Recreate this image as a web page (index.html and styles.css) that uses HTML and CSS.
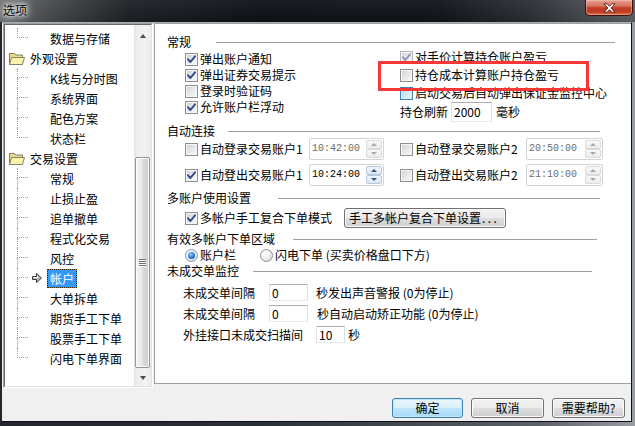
FILE: index.html
```html
<!DOCTYPE html>
<html lang="zh-CN">
<head>
<meta charset="utf-8">
<title>选项</title>
<link rel="stylesheet" href="styles.css">
</head>
<body>
<div class="window">
  <div class="titlebar">
    <span class="title">选项</span>
    <div class="close">
      <svg width="13" height="10" viewBox="0 0 13 10"><path d="M1 0.8h3.2l2.3 2.5 2.3-2.5h3.2l-3.9 4.2 3.9 4.2h-3.2l-2.3-2.5-2.3 2.5h-3.2l3.9-4.2z" fill="#fff" stroke="#4a1a12" stroke-width="0.9" stroke-linejoin="round"/></svg>
    </div>
  </div>
  <div class="client">
    <div class="main">
      <div class="tree">
        <div class="tree-inner">
          <ul class="tree-list">
            <li class="node child last"><span class="elbow"><i></i><i></i></span><span class="slot"></span><span class="lbl">数据与存储</span></li>
            <li class="node folder"><svg class="fold" width="16" height="13" viewBox="0 0 16 13"><path d="M0.5 1.5h5l1.2 1.5h6.8v9.5h-13z" fill="#e9dc8a" stroke="#7d7b6c"/><path d="M2.6 5.5h12.9l-2.1 7h-12.9z" fill="#fbf3a8" stroke="#85836e"/></svg><span class="lbl">外观设置</span></li>
            <li class="node child"><span class="elbow"><i></i><i></i></span><span class="slot"></span><span class="lbl">K线与分时图</span></li>
            <li class="node child"><span class="elbow"><i></i><i></i></span><span class="slot"></span><span class="lbl">系统界面</span></li>
            <li class="node child"><span class="elbow"><i></i><i></i></span><span class="slot"></span><span class="lbl">配色方案</span></li>
            <li class="node child last"><span class="elbow"><i></i><i></i></span><span class="slot"></span><span class="lbl">状态栏</span></li>
            <li class="node folder"><svg class="fold" width="16" height="13" viewBox="0 0 16 13"><path d="M0.5 1.5h5l1.2 1.5h6.8v9.5h-13z" fill="#e9dc8a" stroke="#7d7b6c"/><path d="M2.6 5.5h12.9l-2.1 7h-12.9z" fill="#fbf3a8" stroke="#85836e"/></svg><span class="lbl">交易设置</span></li>
            <li class="node child"><span class="elbow"><i></i><i></i></span><span class="slot"></span><span class="lbl">常规</span></li>
            <li class="node child"><span class="elbow"><i></i><i></i></span><span class="slot"></span><span class="lbl">止损止盈</span></li>
            <li class="node child"><span class="elbow"><i></i><i></i></span><span class="slot"></span><span class="lbl">追单撤单</span></li>
            <li class="node child"><span class="elbow"><i></i><i></i></span><span class="slot"></span><span class="lbl">程式化交易</span></li>
            <li class="node child"><span class="elbow"><i></i><i></i></span><span class="slot"></span><span class="lbl">风控</span></li>
            <li class="node child"><span class="elbow"><i></i><i></i></span><span class="slot"><svg width="10" height="10" viewBox="0 0 10 10"><path d="M0.5 3.5h4v-3l5 4.5-5 4.5v-3h-4z" fill="#b8b8b8" stroke="#3c3c3c"/><path d="M1.5 4.5h4v-1.6" fill="none" stroke="#f4f4f4"/></svg></span><span class="lbl sel">帐户</span></li>
            <li class="node child"><span class="elbow"><i></i><i></i></span><span class="slot"></span><span class="lbl">大单拆单</span></li>
            <li class="node child"><span class="elbow"><i></i><i></i></span><span class="slot"></span><span class="lbl">期货手工下单</span></li>
            <li class="node child"><span class="elbow"><i></i><i></i></span><span class="slot"></span><span class="lbl">股票手工下单</span></li>
            <li class="node child last"><span class="elbow"><i></i><i></i></span><span class="slot"></span><span class="lbl">闪电下单界面</span></li>
          </ul>
          <div class="vscroll">
            <div class="sbtn"><i class="tri-up"></i></div>
            <div class="track"><div class="thumb"><i></i><i></i><i></i><i></i></div></div>
            <div class="sbtn"><i class="tri-dn"></i></div>
          </div>
        </div>
      </div>

      <div class="panel">
        <div class="hdr"><span>常规</span><i class="rule r1"></i></div>
        <div class="general">
          <div class="gcol gl">
            <label class="crow"><span class="cb"><svg class="ck" width="9" height="9" viewBox="0 0 9 9"><path d="M1 4.3 3.4 7 8 1.3"/></svg></span>弹出账户通知</label>
            <label class="crow"><span class="cb"><svg class="ck" width="9" height="9" viewBox="0 0 9 9"><path d="M1 4.3 3.4 7 8 1.3"/></svg></span>弹出证券交易提示</label>
            <label class="crow"><span class="cb"></span>登录时验证码</label>
            <label class="crow"><span class="cb"><svg class="ck" width="9" height="9" viewBox="0 0 9 9"><path d="M1 4.3 3.4 7 8 1.3"/></svg></span>允许账户栏浮动</label>
          </div>
          <div class="gcol gr">
            <label class="crow"><span class="cb dim"><svg class="ck" width="9" height="9" viewBox="0 0 9 9"><path d="M1 4.3 3.4 7 8 1.3"/></svg></span>对手价计算持仓账户盈亏</label>
            <label class="crow"><span class="cb"></span>持仓成本计算账户持仓盈亏</label>
            <label class="crow"><span class="cb hot"></span>启动交易后自动弹出保证金监控中心</label>
            <div class="crow refresh">持仓刷新<span class="edit e-2000">2000</span><span class="unit">毫秒</span></div>
          </div>
        </div>

        <div class="hdr h-auto"><span>自动连接</span><i class="rule r2"></i></div>
        <div class="trow">
          <label class="tgrp tg1"><span class="cb"></span>自动登录交易账户1</label>
          <div class="timebox w75 dis"><span class="tv">10:42:00</span><span class="spin"><b class="up"></b><b class="dn"></b></span></div>
          <label class="tgrp tg2"><span class="cb"></span>自动登录交易账户2</label>
          <div class="timebox w77 dis"><span class="tv">20:50:00</span><span class="spin"><b class="up"></b><b class="dn"></b></span></div>
        </div>
        <div class="trow trow2">
          <label class="tgrp tg1"><span class="cb"><svg class="ck" width="9" height="9" viewBox="0 0 9 9"><path d="M1 4.3 3.4 7 8 1.3"/></svg></span>自动登出交易账户1</label>
          <div class="timebox w75 act"><span class="tv">10:24:00</span><span class="spin"><b class="up"></b><b class="dn"></b></span></div>
          <label class="tgrp tg2"><span class="cb"></span>自动登出交易账户2</label>
          <div class="timebox w77 dis"><span class="tv">21:10:00</span><span class="spin"><b class="up"></b><b class="dn"></b></span></div>
        </div>

        <div class="hdr h-multi"><span>多账户使用设置</span><i class="rule r3"></i></div>
        <div class="mrow">
          <label class="tgrp"><span class="cb"><svg class="ck" width="9" height="9" viewBox="0 0 9 9"><path d="M1 4.3 3.4 7 8 1.3"/></svg></span>多帐户手工复合下单模式</label>
          <button class="pbtn">手工多帐户复合下单设置<span class="dots">...</span></button>
        </div>

        <div class="hdr h-area"><span>有效多帐户下单区域</span><i class="rule r4"></i></div>
        <div class="rrow">
          <label class="tgrp"><span class="rb on"><i></i></span>账户栏</label>
          <label class="tgrp rg2"><span class="rb"></span>闪电下单 (买卖价格盘口下方)</label>
        </div>

        <div class="hdr h-mon"><span>未成交单监控</span><i class="rule r5"></i></div>
        <div class="urow">
          <span class="ulbl">未成交单间隔</span><span class="edit e-sec">0</span><span class="usfx">秒发出声音警报 (0为停止)</span>
        </div>
        <div class="urow">
          <span class="ulbl">未成交单间隔</span><span class="edit e-sec">0</span><span class="usfx s2">秒自动启动矫正功能 (0为停止)</span>
        </div>
        <div class="urow">
          <span class="ulbl wide">外挂接口未成交扫描间</span><span class="edit e-scan">10</span><span class="usfx s3">秒</span>
        </div>
      </div>
    </div>

    <div class="buttons">
      <button class="btn default">确定</button>
      <button class="btn">取消</button>
      <button class="btn">需要帮助?</button>
    </div>
  </div>
  <div class="annot"></div>
</div>
</body>
</html>
```

FILE: styles.css
```css
* { box-sizing: border-box; margin: 0; padding: 0; }
html, body { width: 635px; height: 426px; overflow: hidden; }
body {
  font: 12px/16px "Noto Sans CJK SC", "Noto Sans", sans-serif;
  color: #000;
  background: #1c2027;
}
.window {
  position: relative;
  width: 635px;
  height: 426px;
  display: flex;
  flex-direction: column;
  background: linear-gradient(to right, #23272d 0, #2a2e35 40%, #5d6268 85%, #9a9ea3 100%);
}

/* title bar */
.titlebar {
  height: 22px;
  display: flex;
  align-items: flex-start;
  justify-content: space-between;
  background:
    linear-gradient(to bottom, rgba(255,255,255,0.06), rgba(0,0,0,0.05)),
    linear-gradient(to right, #6c6e71 0, #45484c 50px, #1b1e23 130px, #0c1015 260px, #0f1318 440px, #2a2d32 530px, #4c4f54 600px, #5a5d61 635px);
}
.title {
  margin: 3px 0 0 3px;
  line-height: 14px;
  color: #000;
  text-shadow: 0 0 3px #fff, 0 0 6px #fff, 0 0 10px rgba(255,255,255,0.8), 0 0 14px rgba(255,255,255,0.6);
}
.close {
  width: 48px;
  height: 16px;
  margin-right: 2px;
  display: flex;
  align-items: center;
  justify-content: center;
  border: 1px solid #3a120c;
  border-top: none;
  border-radius: 0 0 5px 5px;
  background: linear-gradient(to bottom, #e6a091 0%, #d7745f 40%, #c33f25 52%, #bd3a21 75%, #de6a45 100%);
  box-shadow: inset 0 0 0 1px rgba(255,210,200,0.45);
}

/* client */
.client {
  flex: 1;
  margin: 0 3px 4px 2px;
  background: #f0f0f0;
  border-top: 1px solid #a9acb0;
  border-right: 1px solid #0d0f12;
  border-bottom: 1px solid #0d0f12;
  display: flex;
  flex-direction: column;
}
.main {
  height: 365px;
  display: flex;
}

/* tree */
.tree {
  width: 150px;
  height: 365px;
  margin-left: 1px;
  border: 1px solid;
  border-color: #a0a0a0 #fff #fff #a0a0a0;
  background: #fff;
}
.tree-inner {
  height: 100%;
  display: flex;
  border: 1px solid;
  border-color: #696969 #e3e3e3 #e3e3e3 #696969;
}
.tree-list {
  flex: 1;
  list-style: none;
  padding-top: 3px;
  overflow: hidden;
}
.node {
  height: 20px;
  display: flex;
  align-items: center;
  white-space: nowrap;
}
.node.folder { padding-left: 4px; }
.fold { flex: none; margin-right: 2px; }
.elbow {
  width: 11px;
  height: 20px;
  margin-left: 12px;
  display: flex;
  flex-direction: column;
  flex: none;
}
.elbow i {
  display: block;
  height: 10px;
  border-left: 1px dotted #a0a0a0;
}
.elbow i:first-child { border-bottom: 1px dotted #a0a0a0; }
.node.last .elbow i:last-child { border-left-color: transparent; }
.slot {
  width: 19px;
  flex: none;
  display: flex;
  align-items: center;
  padding-left: 4px;
}
.lbl {
  border: 1px dotted transparent;
  padding: 0 2px;
  line-height: 17px;
}
.lbl.sel {
  background: #3399ff;
  color: #fff;
  border-color: #3a2400;
}

/* scrollbar */
.vscroll {
  width: 17px;
  flex: none;
  display: flex;
  flex-direction: column;
  background: linear-gradient(to right, #e3e3e3 0, #eeeeee 20%, #f2f2f2 60%, #ececec 100%);
}
.sbtn {
  height: 17px;
  display: flex;
  align-items: center;
  justify-content: center;
}
.tri-up, .tri-dn {
  width: 0;
  height: 0;
  border-left: 3.5px solid transparent;
  border-right: 3.5px solid transparent;
}
.tri-up { border-bottom: 4px solid #4a4a4a; margin-top: 5px; }
.tri-dn { border-top: 4px solid #4a4a4a; margin-top: 1px; }
.track {
  flex: 1;
  padding: 115px 1px 0;
}
.thumb {
  height: 211px;
  border: 1px solid #959595;
  border-radius: 2px;
  background: linear-gradient(to right, #f4f4f4 0, #e9e9e9 45%, #d9d9d9 55%, #cfcfcf 100%);
  box-shadow: inset 0 0 0 1px rgba(255,255,255,0.85);
  display: flex;
  flex-direction: column;
  align-items: center;
  justify-content: center;
}
.thumb i {
  display: block;
  width: 7px;
  height: 2px;
  border-top: 1px solid #707070;
  border-bottom: 1px solid #fafafa;
}

/* right panel */
.panel {
  flex: 1;
  height: 361px;
  margin-left: 1px;
  background: #fff;
  border-top: 1px solid #a0a0a0;
  border-left: 1px solid #a0a0a0;
  border-bottom: 1px solid #a0a0a0;
  padding-top: 11px;
}
.hdr {
  height: 14px;
  line-height: 14px;
  display: flex;
  align-items: center;
  padding-left: 12px;
  white-space: nowrap;
}
.rule { display: block; height: 1px; background: #a0a0a0; }
.r1 { margin-left: 25px; width: 399px; }
.r2 { margin-left: 13px; width: 372px; }
.r3 { margin-left: 27px; width: 322px; }
.r4 { margin-left: 18px; width: 304px; }
.r5 { margin-left: 14px; width: 339px; }

.general { height: 73px; display: flex; }
.gcol { display: flex; flex-direction: column; }
.gl { width: 245px; padding: 2px 0 0 30px; }
.gr .crow + .crow { margin-top: 2px; }
.gr .crow.refresh { margin-top: 1px; height: 20px; }
.crow {
  height: 16px;
  display: flex;
  align-items: center;
  white-space: nowrap;
}
.unit { margin-left: 4px; }

/* checkbox */
.cb {
  width: 13px;
  height: 13px;
  flex: none;
  margin-right: 2px;
  border: 1px solid #8e8f8f;
  background: linear-gradient(135deg, #cdd0d4 0%, #e6e7e9 50%, #fafafa 100%);
  box-shadow: inset 0 0 0 1px #f6f6f6;
  display: flex;
  align-items: center;
  justify-content: center;
}
.cb.hot {
  border-color: #3c7fb1;
  background: linear-gradient(135deg, #a9d6f2 0%, #cde8f8 50%, #eef8fd 100%);
  box-shadow: inset 0 0 0 1px #def0fa;
}
.ck path {
  fill: none;
  stroke: #34488a;
  stroke-width: 1.9;
  stroke-linecap: round;
  stroke-linejoin: round;
}
.cb.dim .ck path { stroke: #8d98bb; }
.cb.dim { border-color: #b5b6b6; }

/* radio */
.rb {
  width: 13px;
  height: 13px;
  flex: none;
  margin-right: 2px;
  border-radius: 50%;
  border: 1px solid #8e8f8f;
  background: radial-gradient(circle at 35% 35%, #ffffff 0, #e8e9ea 60%, #cfd1d3 100%);
  display: flex;
  align-items: center;
  justify-content: center;
}
.rb.on { border-color: #7c97b5; }
.rb i {
  display: block;
  width: 7px;
  height: 7px;
  border-radius: 50%;
  background: radial-gradient(circle at 40% 35%, #9ad7ff 0, #3684d4 45%, #0d3d88 100%);
}

/* time rows */
.trow {
  height: 22px;
  display: flex;
  align-items: center;
  padding-left: 30px;
  white-space: nowrap;
}
.trow2 { margin-top: 4px; }
.tgrp { display: flex; align-items: center; white-space: nowrap; }
.tg1 { width: 124px; }
.tg2 { margin-left: 16px; width: 126px; }
.timebox {
  height: 22px;
  display: flex;
  padding: 1px;
  border: 1px solid #d3d3d3;
  border-radius: 2px;
  background: #fff;
}
.w75 { width: 75px; }
.w77 { width: 77px; }
.tv {
  flex: 1;
  padding-left: 1px;
  font: 10px/18px "Liberation Mono", "DejaVu Sans Mono", monospace;
  color: #6d6d6d;
}
.act .tv { color: #000; }
.spin { width: 16px; display: flex; flex-direction: column; }
.spin b {
  flex: 1;
  display: flex;
  align-items: center;
  justify-content: center;
  border: 1px solid #dadada;
  border-radius: 2px;
  background: linear-gradient(#f8f8f8, #ececec);
}
.spin b::after {
  content: "";
  width: 0;
  height: 0;
  border-left: 3px solid transparent;
  border-right: 3px solid transparent;
}
.spin .up::after { border-bottom: 3px solid #a9a9a9; }
.spin .dn::after { border-top: 3px solid #a9a9a9; }
.act .spin b { border-color: #b7c8dc; background: linear-gradient(#f1f6fc, #dbe7f4); }
.act .spin .up::after { border-bottom-color: #34558a; }
.act .spin .dn::after { border-top-color: #34558a; }

.h-auto { margin-top: 2px; }
.h-multi { margin-top: 5px; }
.h-area { margin-top: 4px; }
.h-mon { margin-top: 1px; }

.mrow {
  margin-top: 3px;
  height: 20px;
  display: flex;
  align-items: center;
  padding-left: 30px;
}
.pbtn {
  margin-left: 12px;
  width: 162px;
  height: 20px;
  padding-left: 4px;
  text-align: left;
  font: inherit;
  line-height: 18px;
  color: #000;
  border: 1px solid #707070;
  border-radius: 3px;
  background: linear-gradient(#f2f2f2 0%, #ebebeb 50%, #dddddd 51%, #cfcfcf 100%);
  box-shadow: inset 0 0 0 1px #fbfbfb;
  white-space: nowrap;
}
.dots { letter-spacing: 2.4px; margin-left: 1px; }

.rrow {
  margin-top: 1px;
  height: 16px;
  display: flex;
  align-items: center;
  padding-left: 30px;
}
.rg2 { margin-left: 24px; }

.urow {
  margin-top: 4px;
  height: 17px;
  display: flex;
  align-items: center;
  padding-left: 28px;
  white-space: nowrap;
}
.h-mon + .urow { margin-top: 6px; }
.ulbl { width: 86px; }
.ulbl.wide { width: 133px; }
.edit {
  display: block;
  height: 17px;
  line-height: 15px;
  padding-left: 2px;
  border: 1px solid;
  border-color: #abadb3 #dbdfe6 #e3e9ef #e2e3ea;
  background: #fff;
  flex: none;
}
.e-sec { width: 39px; }
.e-scan { width: 29px; }
.e-2000 { width: 41px; height: 20px; line-height: 18px; margin-left: 3px; }
.usfx { margin-left: 8px; }
.usfx.s2 { margin-left: 9px; }
.usfx.s3 { margin-left: 3px; }

/* bottom buttons */
.buttons {
  flex: 1;
  display: flex;
  justify-content: flex-end;
  align-items: flex-start;
  gap: 8px;
  padding: 10px 6px 0 0;
}
.btn {
  width: 73px;
  height: 20px;
  font: inherit;
  line-height: 18px;
  color: #000;
  text-align: center;
  border: 1px solid #707070;
  border-radius: 3px;
  background: linear-gradient(#f2f2f2 0%, #ebebeb 50%, #dddddd 51%, #cfcfcf 100%);
  box-shadow: inset 0 0 0 1px #fcfcfc;
}
.btn.default {
  width: 71px;
  border-color: #3c7fb1;
  background: linear-gradient(#eaf6fd 0%, #d9f0fc 50%, #bee6fd 51%, #a7d9f5 100%);
  box-shadow: inset 0 0 0 1px #c4e6f9;
}

/* annotation overlay */
.annot {
  position: absolute;
  left: 378px;
  top: 61px;
  width: 211px;
  height: 30px;
  border: 3px solid #fb3636;
}
```
